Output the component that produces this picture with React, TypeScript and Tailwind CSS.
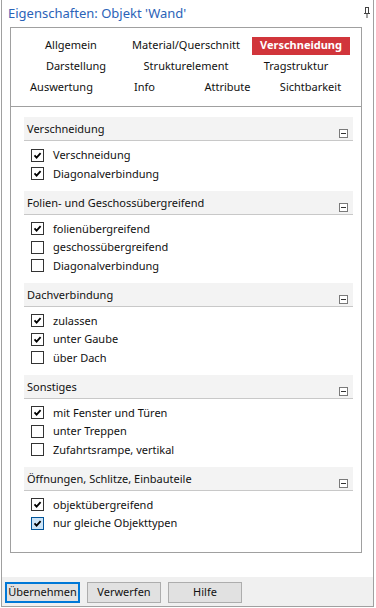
import React from 'react';

const rows: { w: string; items: string[] }[] = [
  { w: 'w-[115px]', items: ['Allgemein', 'Material/Querschnitt', 'Verschneidung'] },
  { w: 'w-[110px]', items: ['Darstellung', 'Strukturelement', 'Tragstruktur'] },
  { w: 'w-[83px]', items: ['Auswertung', 'Info', 'Attribute', 'Sichtbarkeit'] },
];

const sections: { title: string; items: { label: string; checked: boolean; hover?: boolean }[] }[] = [
  {
    title: 'Verschneidung',
    items: [
      { label: 'Verschneidung', checked: true },
      { label: 'Diagonalverbindung', checked: true },
    ],
  },
  {
    title: 'Folien- und Geschossübergreifend',
    items: [
      { label: 'folienübergreifend', checked: true },
      { label: 'geschossübergreifend', checked: false },
      { label: 'Diagonalverbindung', checked: false },
    ],
  },
  {
    title: 'Dachverbindung',
    items: [
      { label: 'zulassen', checked: true },
      { label: 'unter Gaube', checked: true },
      { label: 'über Dach', checked: false },
    ],
  },
  {
    title: 'Sonstiges',
    items: [
      { label: 'mit Fenster und Türen', checked: true },
      { label: 'unter Treppen', checked: false },
      { label: 'Zufahrtsrampe, vertikal', checked: false },
    ],
  },
  {
    title: 'Öffnungen, Schlitze, Einbauteile',
    items: [
      { label: 'objektübergreifend', checked: true },
      { label: 'nur gleiche Objekttypen', checked: true, hover: true },
    ],
  },
];

const Check = ({ checked, hover }: { checked: boolean; hover?: boolean }) => (
  <div
    className={
      'w-[13px] h-[13px] border flex items-center justify-center ' +
      (hover ? 'border-[#005499] bg-[#cce4f7]' : 'border-[#333333] bg-white')
    }
  >
    {checked && (
      <svg width="9" height="9" viewBox="0 0 9 9">
        <path d="M1.5 4.3 L3.6 6.6 L7.6 2.2" fill="none" stroke="#000" strokeWidth="1.8" />
      </svg>
    )}
  </div>
);

export default function App() {
  return (
    <div className="w-[376px] h-[608px] bg-white text-[11px] text-[#111]" style={{ fontFamily: '"Noto Sans", sans-serif' }}>
      <div className="ml-[1px] w-[373px] h-[607px] border-x border-b border-[#a0a0a0] flex flex-col">
        {/* title */}
        <div className="h-[27px] flex items-center justify-between pl-[6px] pr-[3px]">
          <span className="text-[13px] text-[#2b63b8]">Eigenschaften: Objekt 'Wand'</span>
          <svg width="6" height="11" viewBox="0 0 6 11" className="mb-[2px]">
            <path d="M1 0.5 H5 M1.5 0.5 V6 M4.5 0.5 V6 M0 6.5 H6 M3 6.5 V11" fill="none" stroke="#444" strokeWidth="1" />
          </svg>
        </div>

        {/* main panel */}
        <div className="ml-[8px] w-[352px] h-[526px] border border-[#a0a0a0] flex flex-col">
          <div className="pt-[7px] pb-[8px] border-b border-[#a0a0a0] flex flex-col">
            {rows.map((r, ri) => (
              <div key={ri} className="h-[21px] flex justify-center">
                {r.items.map((t) => (
                  <div key={t} className={r.w + ' flex items-center justify-center'}>
                    {t === 'Verschneidung' ? (
                      <span className="w-[98px] h-[18px] bg-[#d1353b] text-white font-bold flex items-center justify-center text-[11px]">
                        {t}
                      </span>
                    ) : (
                      <span>{t}</span>
                    )}
                  </div>
                ))}
              </div>
            ))}
          </div>

          <div className="pt-[10px] pl-[13px] pr-[8px] flex flex-col">
            {sections.map((s) => (
              <div key={s.title} className="flex flex-col pb-[7.5px]">
                <div className="h-[24px] bg-[#f3f3f3] border-b border-[#c8c8c8] flex justify-between pl-[3px] pr-[5px]">
                  <span className="self-center pt-[2px]">{s.title}</span>
                  <div className="self-end mb-[2px] w-[9px] h-[9px] border border-[#7a7a7a] bg-white flex items-center justify-center">
                    <div className="w-[5px] h-[1px] bg-[#333]" />
                  </div>
                </div>
                <div className="pt-[5px] pl-[7px] flex flex-col">
                  {s.items.map((it) => (
                    <div key={it.label} className="h-[18.5px] flex items-center gap-[9px]">
                      <Check checked={it.checked} hover={it.hover} />
                      <span>{it.label}</span>
                    </div>
                  ))}
                </div>
              </div>
            ))}
          </div>
        </div>

        <div className="flex-1" />

        {/* buttons */}
        <div className="h-[29px] bg-[#f0f0f0] flex items-start pt-[5px] pl-[3px] gap-[7px]">
          <button className="w-[75px] h-[21px] bg-[#e1e1e1] border-2 border-[#0078d7] flex items-center justify-center text-[11px]">
            Übernehmen
          </button>
          <button className="w-[74px] h-[21px] bg-[#e1e1e1] border border-[#adadad] flex items-center justify-center text-[11px]">
            Verwerfen
          </button>
          <button className="w-[74px] h-[21px] bg-[#e1e1e1] border border-[#adadad] flex items-center justify-center text-[11px]">
            Hilfe
          </button>
        </div>
      </div>
    </div>
  );
}
